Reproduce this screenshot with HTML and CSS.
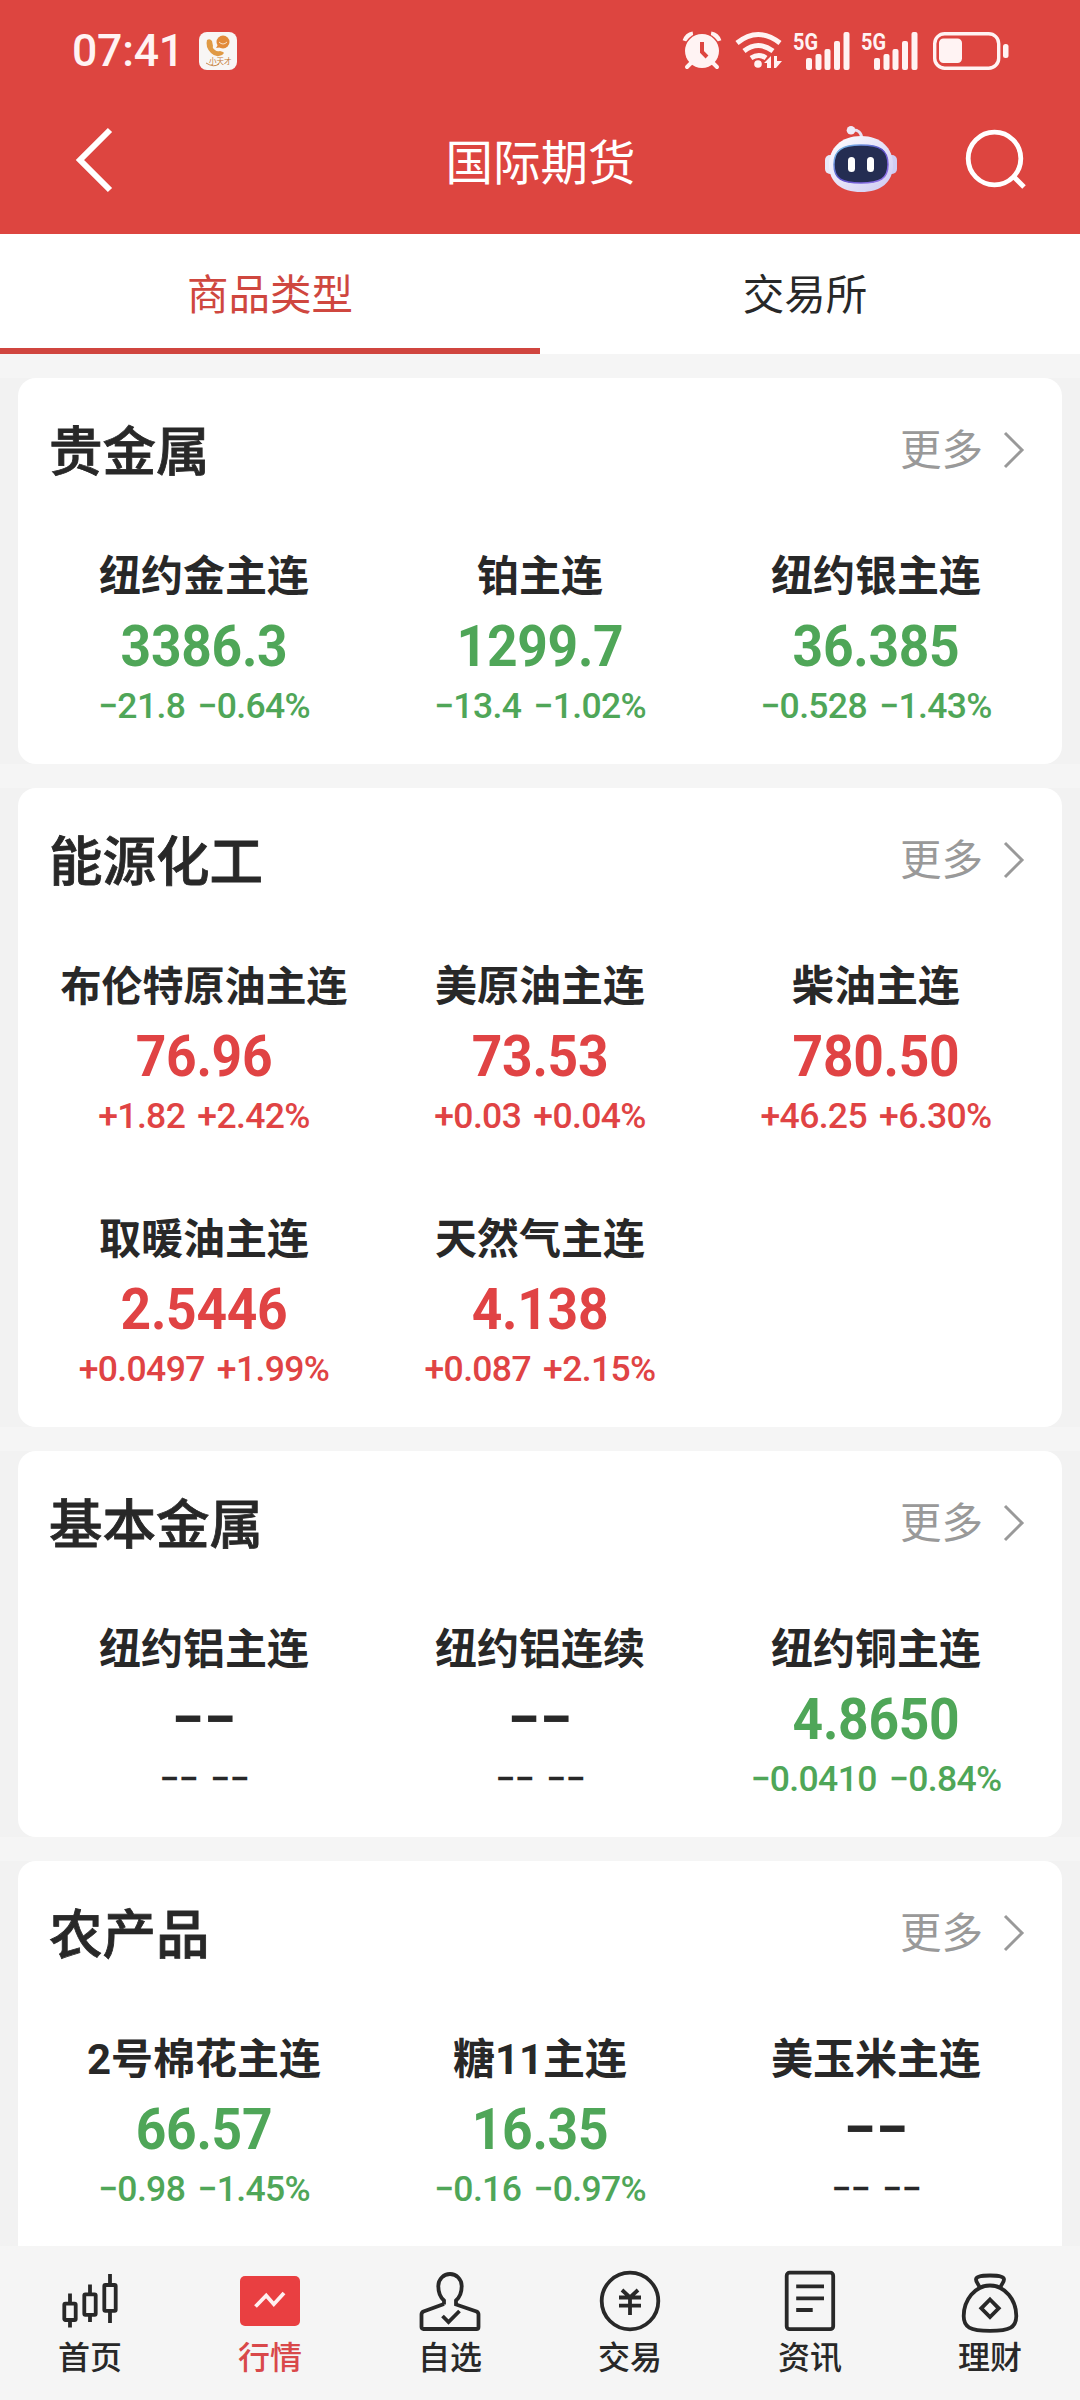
FILE: index.html
```
<!DOCTYPE html>
<html lang="zh-CN">
<head>
    <meta charset="UTF-8">
    <meta name="viewport" content="width=device-width, initial-scale=1.0">
    <title>国际期货</title>
    <link rel="stylesheet" href="styles.css">
</head>
<body>
    <header>
        <!-- 状态栏 -->
        <div class="status-bar">
            <span class="time">07:41</span>
            <svg class="app-icon" width="38" height="38" viewBox="0 0 38 38">
                <rect width="38" height="38" rx="8" fill="#f8f6f5"/>
                <path d="M8 8q3-2 5 1l1 5q-1 2 2 4 2 2 5 1l3 1q2 1-1 3-6 3-11-2-6-6-4-13z" fill="#e09a45"/>
                <circle cx="24" cy="10" r="6.5" fill="#e28a3a"/>
                <path d="M17 16l3-5 4 4z" fill="#e28a3a"/>
                <path d="M20 10q4 4 8 0" stroke="#f8e0c8" fill="none"/>
                <text x="10" y="32" class="app-text">小天才</text>
                <path d="M7 31q8 5 13 1" stroke="#c98a50" fill="none"/>
            </svg>
            <div class="status-icons">
                <svg width="38" height="38" viewBox="0 0 38 38">
                    <path d="M2 9q2-6 8-7M36 9q-2-6-8-7" stroke="#fff3f3" stroke-width="5" fill="none"/>
                    <circle cx="19" cy="19" r="18.5" fill="#dd4540"/>
                    <circle cx="19" cy="19" r="17" fill="#fff3f3"/>
                    <path d="M9 30l-5 5M29 30l5 5" stroke="#fff3f3" stroke-width="4" stroke-linecap="round"/>
                    <path d="M19 10v10l5 5" stroke="#dd4540" stroke-width="4" fill="none"/>
                </svg>
                <svg class="wifi" width="48" height="38" viewBox="0 0 48 38">
                    <g stroke="#fff3f3" stroke-width="5" fill="none">
                        <path d="M2 11Q23-6 45 11M9 19q14-11 29 0M16 26q8-5 15 0"/>
                    </g>
                    <circle cx="23" cy="32" r="3.8" fill="#fff3f3"/>
                    <path d="M29 31l7-7v12h-4v-5zM39 24h3v5h5l-6 7h-2z" fill="#fff3f3"/>
                </svg>
                <svg class="signal" width="58" height="38" viewBox="0 0 58 38">
                    <text x="0" y="18" class="net-text" textLength="25" lengthAdjust="spacingAndGlyphs">5G</text>
                    <g fill="#fff3f3">
                        <rect x="13" y="26" width="6" height="12" rx="2"/>
                        <rect x="22.5" y="22" width="6" height="16" rx="2"/>
                        <rect x="31.5" y="17" width="6" height="21" rx="2"/>
                        <rect x="41" y="9" width="6" height="29" rx="2"/>
                        <rect x="50.5" y="0" width="6" height="38" rx="2"/>
                    </g>
                </svg>
                <svg class="signal" width="58" height="38" viewBox="0 0 58 38">
                    <text x="0" y="18" class="net-text" textLength="25" lengthAdjust="spacingAndGlyphs">5G</text>
                    <g fill="#fff3f3">
                        <rect x="13" y="26" width="6" height="12" rx="2"/>
                        <rect x="22.5" y="22" width="6" height="16" rx="2"/>
                        <rect x="31.5" y="17" width="6" height="21" rx="2"/>
                        <rect x="41" y="9" width="6" height="29" rx="2"/>
                        <rect x="50.5" y="0" width="6" height="38" rx="2"/>
                    </g>
                </svg>
                <svg class="battery" width="76" height="38" viewBox="0 0 76 38">
                    <rect x="1.7" y="1.7" width="64" height="34.5" rx="10" fill="none" stroke="#fff3f3" stroke-width="3.4"/>
                    <rect x="6" y="6.5" width="23" height="24.5" rx="4.5" fill="#fff3f3"/>
                    <rect x="70" y="12" width="5.5" height="14" rx="2.5" fill="#fff3f3"/>
                </svg>
            </div>
        </div>
        <!-- 标题栏 -->
        <div class="title-bar">
            <svg class="back" width="40" height="68" viewBox="0 0 40 68">
                <path d="M36 4L6 34l30 30" fill="none" stroke="#fff" stroke-width="6"/>
            </svg>
            <h1>国际期货</h1>
            <div class="title-icons">
                <svg width="72" height="68" viewBox="0 0 72 68">
                    <defs>
                        <linearGradient id="shell" x1="0" y1="0" x2="1" y2="1">
                            <stop offset="0" stop-color="#fff"/>
                            <stop offset="1" stop-color="#cdc8f2"/>
                        </linearGradient>
                        <linearGradient id="edge" x1="0" y1="0" x2="1" y2="1">
                            <stop offset="0" stop-color="#7fd0ee"/>
                            <stop offset="0.5" stop-color="#5a4fc8"/>
                            <stop offset="1" stop-color="#9a78ee"/>
                        </linearGradient>
                    </defs>
                    <path d="M27 4q9-1 10 9" fill="none" stroke="#e8e0f2" stroke-width="3"/>
                    <circle cx="26" cy="4.300" r="4.300" fill="#efeaf8"/>
                    <rect x="0" y="29" width="12" height="19" rx="5" fill="#e9e8f8"/>
                    <rect x="60" y="29" width="12" height="19" rx="5" fill="#d0cdf3"/>
                    <path d="M36 10C56 10 68 22 68 39S56 66 36 66 4 56 4 39 16 10 36 10z" fill="url(#shell)"/>
                    <path d="M36 19C55 19 63 24 63 38.500S55 57 36 57 9 53 9 38.500 17 19 36 19z" fill="#242d52" stroke="url(#edge)" stroke-width="1.500"/>
                    <rect x="23" y="31" width="7" height="15" rx="3.500" fill="#fff"/>
                    <rect x="42" y="31" width="7" height="15" rx="3.500" fill="#fff"/>
                </svg>
                <svg width="62" height="62" viewBox="0 0 62 62">
                    <circle cx="29.500" cy="29.500" r="26.300" fill="none" stroke="#fff" stroke-width="4.800"/>
                    <path d="M48 47l11 11" stroke="#fff" stroke-width="5"/>
                </svg>
            </div>
        </div>
    </header>

    <div class="tabs">
        <a class="tab active">商品类型</a>
        <a class="tab">交易所</a>
    </div>

    <main>
        <section class="group">
            <div class="card">
                <div class="card-head">
                    <h2>贵金属</h2>
                    <a class="more">更多 <svg width="22" height="38" viewBox="0 0 22 38"><path d="M2 2l17 17L2 36"/></svg></a>
                </div>
                <div class="grid">
                    <div class="item down"><h3>纽约金主连</h3><b>3386.3</b><p>−21.8 −0.64%</p></div>
                    <div class="item down"><h3>铂主连</h3><b>1299.7</b><p>−13.4 −1.02%</p></div>
                    <div class="item down"><h3>纽约银主连</h3><b>36.385</b><p>−0.528 −1.43%</p></div>
                </div>
            </div>
        </section>

        <section class="group">
            <div class="card">
                <div class="card-head">
                    <h2>能源化工</h2>
                    <a class="more">更多 <svg width="22" height="38" viewBox="0 0 22 38"><path d="M2 2l17 17L2 36"/></svg></a>
                </div>
                <div class="grid">
                    <div class="item up"><h3 class="long">布伦特原油主连</h3><b>76.96</b><p>+1.82 +2.42%</p></div>
                    <div class="item up"><h3>美原油主连</h3><b>73.53</b><p>+0.03 +0.04%</p></div>
                    <div class="item up"><h3>柴油主连</h3><b>780.50</b><p>+46.25 +6.30%</p></div>
                    <div class="item up"><h3>取暖油主连</h3><b>2.5446</b><p>+0.0497 +1.99%</p></div>
                    <div class="item up"><h3>天然气主连</h3><b>4.138</b><p>+0.087 +2.15%</p></div>
                </div>
            </div>
        </section>

        <section class="group">
            <div class="card">
                <div class="card-head">
                    <h2>基本金属</h2>
                    <a class="more">更多 <svg width="22" height="38" viewBox="0 0 22 38"><path d="M2 2l17 17L2 36"/></svg></a>
                </div>
                <div class="grid">
                    <div class="item none"><h3>纽约铝主连</h3><b>−−</b><p>−− −−</p></div>
                    <div class="item none"><h3>纽约铝连续</h3><b>−−</b><p>−− −−</p></div>
                    <div class="item down"><h3>纽约铜主连</h3><b>4.8650</b><p>−0.0410 −0.84%</p></div>
                </div>
            </div>
        </section>

        <section class="group">
            <div class="card">
                <div class="card-head">
                    <h2>农产品</h2>
                    <a class="more">更多 <svg width="22" height="38" viewBox="0 0 22 38"><path d="M2 2l17 17L2 36"/></svg></a>
                </div>
                <div class="grid">
                    <div class="item down"><h3>2号棉花主连</h3><b>66.57</b><p>−0.98 −1.45%</p></div>
                    <div class="item down"><h3>糖11主连</h3><b>16.35</b><p>−0.16 −0.97%</p></div>
                    <div class="item none"><h3>美玉米主连</h3><b>−−</b><p>−− −−</p></div>
                </div>
            </div>
        </section>
    </main>

    <!-- 底部导航 -->
    <nav>
        <a>
            <svg viewBox="0 0 64 64">
                <rect x="6.300" y="33.700" width="11.400" height="16.300" rx="1"/>
                <rect x="26.300" y="24.300" width="11.400" height="20.500" rx="1"/>
                <rect x="46.300" y="15" width="11.400" height="25.800" rx="1"/>
                <path d="M12 23.500v10M12 50v7.500M32 14.500v10M32 45v7M52 4v11M52 41v12"/>
            </svg>
            首页
        </a>
        <a class="active">
            <svg viewBox="0 0 64 64">
                <rect x="2" y="6" width="60" height="50" rx="5" class="fill"/>
                <path d="M17.500 36.500L28.200 25.500l7.600 8.700L46 23" class="trend"/>
            </svg>
            行情
        </a>
        <a>
            <svg viewBox="0 0 64 64">
                <path d="M26 34.500v-4C22 27 20.300 23 20.300 16a11.700 12 0 0 1 23.400 0c0 7-1.700 11-5.700 14.500v4L58.500 41.500q2 1 2 3V57q0 2-2 2h-53q-2 0-2-2V44.500q0-2 2-3L26 34"/>
                <path d="M24.500 46l6 6L41.500 41"/>
            </svg>
            自选
        </a>
        <a>
            <svg viewBox="0 0 64 64">
                <circle cx="32" cy="31" r="28.300"/>
                <path d="M24 20l8 7.500 8-7.500M21 27.500h22M21 35.700h22M32 27v18"/>
            </svg>
            交易
        </a>
        <a>
            <svg viewBox="0 0 64 64">
                <rect x="8.700" y="2.700" width="46.500" height="56.500" rx="3"/>
                <path d="M18.200 16.300H46M18.200 28.300H46M18.200 40H34.700"/>
            </svg>
            资讯
        </a>
        <a>
            <svg viewBox="0 0 64 64">
                <path d="M21.500 17.500c-.5-3-3.500-5-3.500-8C18 6.500 24 5.500 32 5.500s14 1 14 4c0 3-3 5-3.500 8"/>
                <path d="M32 15.500C17 15.500 5.700 30 5.700 46c0 11 6 14.800 26.300 14.800S58.300 57 58.300 46C58.300 30 47 15.500 32 15.500z"/>
                <path d="M32 29.500l8.700 8.800-8.700 8.700-8.700-8.700z"/>
            </svg>
            理财
        </a>
    </nav>
</body>
</html>
```

FILE: styles.css
```
* { box-sizing: border-box; }
body { margin: 0; height: 2400px; display: flex; flex-direction: column; overflow: hidden; font-family: Roboto, "Noto Sans CJK SC", sans-serif; background-color: #f5f5f5; color: #282828; }
h1, h2, h3, p { margin: 0; }
svg { display: block; flex-shrink: 0; overflow: visible; }

header { height: 234px; flex-shrink: 0; background-color: #dd4540; color: white; }
.status-bar { height: 102px; display: flex; align-items: center; padding: 0 71px 0 72px; }
.time { width: 127px; font-size: 44.500px; font-weight: 500; letter-spacing: -0.200px; line-height: 50px; color: #fff3f3; }
.app-text { font-size: 7.500px; fill: #c47a35; }
.status-icons { display: flex; margin-left: auto; }
.wifi { margin-left: 14px; }
.signal { margin-left: 10px; }
.battery { margin-left: 14px; }
.net-text { font-size: 24px; font-weight: 700; fill: #fff3f3; }
.title-bar { height: 116px; display: grid; grid-template-columns: 1fr auto 1fr; align-items: center; padding: 0 53px 0 74px; }
.title-bar h1 { font-size: 47.500px; font-weight: 400; line-height: 60px; margin-right: 20px; margin-left: 20px; margin-top: 8px; transform: translateX(-10px); }
.title-icons { display: flex; justify-content: flex-end; gap: 68px; align-items: center; }

.tabs { height: 120px; flex-shrink: 0; display: flex; background-color: white; }
.tab { width: 50%; text-align: center; font-size: 41.500px; line-height: 123px; border-bottom: 6px solid transparent; height: 120px; }
.tab:last-child { padding-right: 10px; }
.tab.active { color: #cf473f; border-bottom-color: #d0453f; }

main { flex: 1; min-height: 0; overflow: hidden; padding-top: 24px; }
.group { padding: 0 18px; margin-bottom: 24px; background-color: #f2f2f2; }
.group:last-child { margin-bottom: 0; }
.card { background-color: white; border-radius: 18px; }
.group:last-child .card { border-radius: 18px 18px 0 0; }
.card-head { height: 133px; display: flex; justify-content: space-between; align-items: center; padding: 10px 37px 0 31px; }
.card-head h2 { font-size: 53.500px; font-weight: 500; margin-top: -4px; -webkit-text-stroke: 0.800px #282828; }
.more { display: flex; align-items: center; gap: 20px; font-size: 41.500px; line-height: 50px; color: #999; padding-top: 2px; }
.more svg { margin-top: -1px; }
.more svg path { fill: none; stroke: #999; stroke-width: 3; }
.grid { display: grid; grid-template-columns: repeat(3, 336px); padding: 0 18px; }
.item { height: 253px; padding-top: 41px; text-align: center; white-space: nowrap; }
.item h3 { font-size: 42px; font-weight: 700; line-height: 50px; }
.item h3.long { font-size: 41px; }
.item b { display: block; margin-top: 9px; font-size: 58px; font-weight: 700; line-height: 70px; letter-spacing: -0.300px; transform: scaleX(0.92); }
.item p { margin-top: 5px; font-size: 35.500px; font-weight: 500; line-height: 40px; letter-spacing: -0.650px; word-spacing: 4px; }
.up b, .up p { color: #e04344; }
.down b, .down p { color: #4fa658; }
.none b { letter-spacing: 0; transform: none; }

nav { height: 154px; flex-shrink: 0; display: flex; background-color: #f5f5f5; padding-top: 24px; }
nav a { flex: 1; display: flex; flex-direction: column; align-items: center; font-size: 32px; font-weight: 500; line-height: 46px; }
nav svg { width: 64px; height: 64px; margin-bottom: 1px; fill: none; stroke: #282828; stroke-width: 3.800; }
nav .active { color: #d9484a; }
nav .fill { fill: #e93f41; stroke: none; }
nav .trend { stroke: #fff0f0; }
```
